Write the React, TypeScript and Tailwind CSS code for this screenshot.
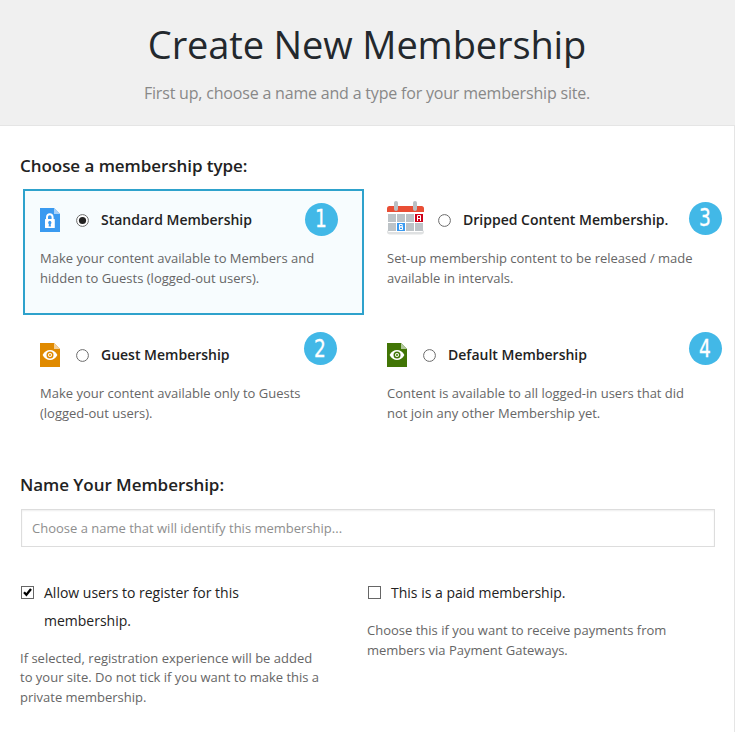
import type { ReactNode } from "react";

function LockIcon() {
  return (
    <svg width="20" height="24" viewBox="0 0 20 24" className="shrink-0">
      <path d="M0 0H14L20 6V24H0Z" fill="#3a9af0" />
      <path d="M14 0L20 6H14Z" fill="#a6d0f8" />
      <path
        fillRule="evenodd"
        fill="#fff"
        d="M6 11V9.2C6 6.7 7.6 5.2 9.8 5.2S13.6 6.7 13.6 9.2V11H14.2Q14.8 11 14.8 11.6V19.4Q14.8 20 14.2 20H5.6Q5 20 5 19.4V11.6Q5 11 5.6 11ZM8 11H11.6V9.2C11.6 7.9 10.9 7.2 9.8 7.2S8 7.9 8 9.2ZM9.8 12.8A1.9 1.9 0 0 0 8.9 16.2L8.6 18.4H11L10.7 16.2A1.9 1.9 0 0 0 9.8 12.8Z"
      />
    </svg>
  );
}

function EyeIcon({ color, fold }: { color: string; fold: string }) {
  return (
    <svg width="20" height="24" viewBox="0 0 20 24" className="shrink-0">
      <path d="M0 0H14L20 6V24H0Z" fill={color} />
      <path d="M14 0L20 6H14Z" fill={fold} />
      <path d="M2.6 12C6 5.4 14 5.4 17.4 12C14 18.6 6 18.6 2.6 12Z" fill="#fff" />
      <circle cx="10" cy="12" r="3.5" fill={color} />
      <circle cx="10" cy="12" r="2" fill="#fff" />
      <circle cx="10" cy="12" r="1" fill={color} />
    </svg>
  );
}

function CalendarIcon() {
  const xs = [1, 10, 19, 28];
  return (
    <svg width="37" height="34" viewBox="0 0 37 34" className="-mt-1 shrink-0">
      <path d="M0 28H37V30.5Q37 33.5 34 33.5H3Q0 33.5 0 30.5Z" fill="#dfe1e2" />
      <path d="M0 11H37V28Q37 31 34 31H3Q0 31 0 28Z" fill="#fff" />
      <path d="M0 11V7.5Q0 5 2.5 5H34.5Q37 5 37 7.5V11Z" fill="#e94e35" />
      <rect x="7" y="0" width="4" height="10" rx="2" fill="#b9bfc3" />
      <rect x="26" y="0" width="4" height="10" rx="2" fill="#b9bfc3" />
      {xs.map((x, i) => (
        <g key={x}>
          <rect x={x} y="13" width="8" height="8" fill={i === 3 ? "#d0021b" : "#bdc3c7"} />
          <rect x={x} y="22" width="8" height="8" fill={i === 1 ? "#3a9af0" : "#bdc3c7"} />
        </g>
      ))}
      <path d="M30.5 20V14.5H33.5V20M30.5 17.5H33.5" fill="none" stroke="#fff" />
      <path d="M12.5 23.5H15.2V25.9H12.5ZM12.5 25.9H15.5V28.5H12.5Z" fill="none" stroke="#fff" />
    </svg>
  );
}

function Radio({ checked = false }: { checked?: boolean }) {
  return (
    <svg width="13" height="13" viewBox="0 0 13 13" className="mt-px shrink-0">
      <circle cx="6.5" cy="6.5" r="5.9" fill="#fff" stroke="#6b6b6b" />
      {checked && <circle cx="6.5" cy="6.5" r="3.6" fill="#222" />}
    </svg>
  );
}

function Checkbox({ checked = false }: { checked?: boolean }) {
  return (
    <svg width="13" height="13" viewBox="0 0 13 13" className="mt-[7px] shrink-0">
      <rect x="0.5" y="0.5" width="12" height="12" fill="#fff" stroke="#666" />
      {checked && <path d="M3 6.2L5.4 8.8L10 3" fill="none" stroke="#000" strokeWidth="2.3" />}
    </svg>
  );
}

type OptionProps = {
  icon: ReactNode;
  title: string;
  lines: string[];
  badge: string;
  badgeClass: string;
  gapClass?: string;
  selected?: boolean;
};

function Option({ icon, title, lines, badge, badgeClass, gapClass = "ml-4", selected }: OptionProps) {
  return (
    <div
      className={`relative h-[126px] border-2 px-[15px] pt-[17px] ${
        selected ? "border-[#2ea2cc] bg-[#f7fcfe]" : "border-transparent"
      }`}
    >
      <div className="flex h-6 items-center">
        {icon}
        <div className={`flex items-center ${gapClass}`}>
          <Radio checked={selected} />
          <span className="ml-3 text-sm font-semibold whitespace-nowrap text-[#222]">{title}</span>
        </div>
      </div>
      <div className="mt-4 text-[13px] leading-5 text-[#666]">
        {lines.map((l) => (
          <p key={l} className="whitespace-nowrap">{l}</p>
        ))}
      </div>
      <div
        className={`absolute flex size-[33px] items-center justify-center rounded-full bg-[#42b8e7] font-['DejaVu_Sans_Condensed','DejaVu_Sans',sans-serif] text-2xl leading-none text-white ${badgeClass}`}
      >
        <span className="scale-x-[0.86] [-webkit-text-stroke:0.3px_white]">{badge}</span>
      </div>
    </div>
  );
}

export default function App() {
  return (
    <div className="h-[732px] w-[735px] overflow-hidden bg-white font-['Open_Sans',sans-serif]">
      <header className="h-[126px] border-b border-[#e5e5e5] bg-[#f0f0f0] pr-px text-center">
        <h1 className="pt-[18px] text-[38px] leading-[52px] tracking-[-0.13px] text-[#23282d]">Create New Membership</h1>
        <p className="mt-[11px] text-base leading-6 tracking-[-0.19px] text-[#888]">
          First up, choose a name and a type for your membership site.
        </p>
      </header>
      <main className="h-[606px] border-r border-[#e5e5e5] pl-5">
        <h2 className="pt-7 text-[17px] leading-6 font-semibold tracking-[-0.05px] text-[#222]">Choose a membership type:</h2>
        <div className="mt-[11px] ml-[3px] grid grid-cols-[341px_341px] gap-x-1.5 gap-y-[9px]">
          <Option
            selected
            icon={<LockIcon />}
            title="Standard Membership"
            lines={["Make your content available to Members and", "hidden to Guests (logged-out users)."]}
            badge="1"
            badgeClass="top-[11.6px] left-[279.6px]"
          />
          <Option
            icon={<CalendarIcon />}
            gapClass="ml-3.5"
            title="Dripped Content Membership."
            lines={["Set-up membership content to be released / made", "available in intervals."]}
            badge="3"
            badgeClass="top-[10.5px] left-[316.6px]"
          />
          <Option
            icon={<EyeIcon color="#e08a00" fold="#f3d09a" />}
            title="Guest Membership"
            lines={["Make your content available only to Guests", "(logged-out users)."]}
            badge="2"
            badgeClass="top-[6.3px] left-[278.6px]"
          />
          <Option
            icon={<EyeIcon color="#417505" fold="#b0c69b" />}
            title="Default Membership"
            lines={["Content is available to all logged-in users that did", "not join any other Membership yet."]}
            badge="4"
            badgeClass="top-[6.3px] left-[316.6px]"
          />
        </div>
        <h2 className="mt-[23px] text-[17px] leading-6 font-semibold tracking-[-0.05px] text-[#222]">Name Your Membership:</h2>
        <div className="mt-3 ml-px flex h-[38px] w-[694px] items-center border border-[#ddd] px-2.5 pt-0.5 text-[13px] text-[#8e8e8e] shadow-[inset_0_1px_2px_rgba(0,0,0,0.07)]">
          Choose a name that will identify this membership...
        </div>
        <div className="mt-8 grid grid-cols-[347px_347px]">
          <section>
            <div className="flex text-sm leading-7 text-[#222]">
              <div className="ml-px"><Checkbox checked /></div>
              <div className="ml-2.5">
                <p>Allow users to register for this</p>
                <p>membership.</p>
              </div>
            </div>
            <div className="mt-[13.5px] text-[13px] leading-[19.6px] whitespace-nowrap text-[#666]">
              <p>If selected, registration experience will be added</p>
              <p>to your site. Do not tick if you want to make this a</p>
              <p>private membership.</p>
            </div>
          </section>
          <section>
            <div className="flex text-sm leading-7 text-[#222]">
              <div className="ml-px"><Checkbox /></div>
              <p className="ml-2.5">This is a paid membership.</p>
            </div>
            <div className="mt-[13px] text-[13px] leading-5 whitespace-nowrap text-[#666]">
              <p>Choose this if you want to receive payments from</p>
              <p>members via Payment Gateways.</p>
            </div>
          </section>
        </div>
      </main>
    </div>
  );
}
